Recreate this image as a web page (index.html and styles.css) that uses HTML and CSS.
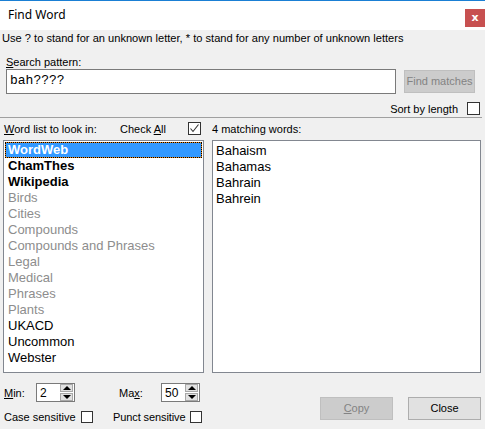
FILE: index.html
```html
<!DOCTYPE html>
<html>
<head>
<meta charset="utf-8">
<link rel="stylesheet" href="styles.css">
</head>
<body>
<div class="window">
  <div class="titlebar">
    <span class="title">Find Word</span>
    <div class="close">x</div>
  </div>
  <div class="content">
    <p class="hint">Use ? to stand for an unknown letter, * to stand for any number of unknown letters</p>
    <div class="search-label"><u>S</u>earch pattern:</div>
    <div class="search-row">
      <div class="input">bah????</div>
      <div class="btn btn-find disabled">Find matches</div>
    </div>
    <div class="sort-row">
      <span>Sort by length</span>
      <span class="cb"></span>
    </div>
    <div class="sep"></div>
    <div class="lists">
      <div class="col col-left">
        <div class="col-head">
          <span class="head-word"><u>W</u>ord list to look in:</span>
          <span class="head-check">Check <u>A</u>ll</span>
          <span class="cb checked"><svg width="11" height="11" viewBox="0 0 11 11"><polyline points="1.5,5.5 4,8.5 9.5,1.5" fill="none" stroke="#333" stroke-width="1.1"/></svg></span>
        </div>
        <div class="listbox left-box">
          <div class="item bold selected">WordWeb</div>
          <div class="item bold">ChamThes</div>
          <div class="item bold">Wikipedia</div>
          <div class="item dim">Birds</div>
          <div class="item dim">Cities</div>
          <div class="item dim">Compounds</div>
          <div class="item dim">Compounds and Phrases</div>
          <div class="item dim">Legal</div>
          <div class="item dim">Medical</div>
          <div class="item dim">Phrases</div>
          <div class="item dim">Plants</div>
          <div class="item">UKACD</div>
          <div class="item">Uncommon</div>
          <div class="item">Webster</div>
        </div>
      </div>
      <div class="col col-right">
        <div class="col-head">
          <span>4 matching words:</span>
        </div>
        <div class="listbox right-box">
          <div class="item">Bahaism</div>
          <div class="item">Bahamas</div>
          <div class="item">Bahrain</div>
          <div class="item">Bahrein</div>
        </div>
      </div>
    </div>
    <div class="bottom">
      <div class="opts">
        <div class="opt-row">
          <div class="cell cell-min">
            <span class="lbl lbl-min"><u>M</u>in:</span>
            <div class="spin"><span class="spin-val">2</span><div class="spin-btns"><span class="sb up"></span><span class="sb down"></span></div></div>
          </div>
          <div class="cell cell-max">
            <span class="lbl lbl-max">Ma<u>x</u>:</span>
            <div class="spin"><span class="spin-val">50</span><div class="spin-btns"><span class="sb up"></span><span class="sb down"></span></div></div>
          </div>
        </div>
        <div class="opt-row row2">
          <div class="cell cell-case">
            <span class="lbl lbl-case">Case sensitive</span>
            <span class="cb small"></span>
          </div>
          <div class="cell cell-punct">
            <span class="lbl lbl-punct">Punct sensitive</span>
            <span class="cb small"></span>
          </div>
        </div>
      </div>
      <div class="buttons">
        <div class="btn disabled"><u>C</u>opy</div>
        <div class="btn">Close</div>
      </div>
    </div>
  </div>
</div>
</body>
</html>
```

FILE: styles.css
```css
* { box-sizing: border-box; }
html, body {
  margin: 0;
  padding: 0;
  width: 485px;
  height: 429px;
  overflow: hidden;
  background: #f0f0f0;
}
body {
  font-family: "Liberation Sans", Arial, sans-serif;
  font-size: 11px;
  color: #000;
}
u { text-decoration: underline; text-underline-offset: 1px; }

.titlebar {
  height: 30px;
  border-top: 1px solid #1a7fd4;
  background: #fff;
  display: flex;
  align-items: flex-start;
}
.title {
  font-family: "Noto Sans", "Open Sans", sans-serif;
  font-size: 12px;
  margin-left: 8px;
  margin-top: 6px;
  line-height: 16px;
  color: #000;
}
.close {
  margin-left: auto;
  margin-top: 8px;
  width: 20px;
  height: 18px;
  background: #c75050;
  color: #fff;
  font-weight: bold;
  font-size: 11px;
  line-height: 17px;
  text-align: center;
  font-family: "DejaVu Sans", sans-serif;
}

.hint {
  margin: 2px 0 0 2px;
  line-height: 13px;
  height: 13px;
  font-size: 11.1px;
}
.search-label {
  margin: 11px 0 0 6px;
  line-height: 13px;
  height: 13px;
}
.search-row {
  display: flex;
  margin-top: 0;
  padding-left: 6px;
}
.input {
  width: 390px;
  height: 25px;
  background: #fff;
  border: 1px solid #7a7a7a;
  font-family: "Liberation Mono", "Courier New", monospace;
  font-size: 13px;
  line-height: 22px;
  padding-left: 3px;
}
.btn {
  width: 73px;
  height: 23px;
  border: 1px solid #adadad;
  background: #e1e1e1;
  text-align: center;
  line-height: 21px;
  font-size: 11px;
}
.btn.disabled {
  background: #cccccc;
  border-color: #bfbfbf;
  color: #838383;
}
.btn-find {
  width: 71px;
  margin-left: 8px;
  margin-top: 1px;
}

.sort-row {
  display: flex;
  align-items: center;
  justify-content: flex-end;
  gap: 9px;
  margin-top: 8px;
  padding-right: 5px;
  height: 13px;
}
.cb {
  display: inline-block;
  width: 13px;
  height: 13px;
  border: 1px solid #333;
  background: #fff;
  flex: none;
}
.cb.small { width: 12px; height: 12px; }
.cb svg { display: block; margin: 0; }

.sep {
  height: 1px;
  background: #a0a0a0;
  margin-top: 2px;
  width: 482px;
}

.lists {
  display: flex;
  margin-top: 4px;
  padding-left: 3px;
}
.col-head {
  display: flex;
  align-items: center;
  height: 13px;
  margin-bottom: 5px;
}
.col-left { width: 201px; }
.col-left .col-head { padding-left: 1px; }
.head-word { width: 116px; }
.head-check { width: 68px; }
.col-right { width: 269px; margin-left: 8px; }

.listbox {
  height: 233px;
  background: #fff;
  border: 1px solid #828790;
  font-size: 13px;
}
.left-box { padding: 1px 1px 0 1px; }
.right-box { padding: 2px 0 0 3px; }
.item {
  height: 16px;
  line-height: 16px;
  white-space: nowrap;
}
.left-box .item { padding-left: 3px; }
.bold { font-weight: bold; }
.dim { color: #8d8d8d; }
.selected {
  background: #3399ff;
  color: #fff;
  box-shadow: inset 0 0 0 1px #e98a1d;
  outline: 1px dotted #000;
  outline-offset: -1px;
}

.bottom {
  display: flex;
  padding: 0 4px 0 4px;
  margin-top: 10px;
}
.opt-row {
  display: flex;
  align-items: center;
  height: 19px;
}
.opt-row.row2 {
  height: 12px;
  margin-top: 9px;
}
.cell { display: flex; align-items: center; }
.cell-min { width: 115px; }
.lbl-min { width: 32px; }
.lbl-max { width: 42px; }
.cell-case { width: 109px; }
.lbl-case { width: 77px; }
.lbl-punct { width: 77px; letter-spacing: -0.1px; }

.spin {
  width: 39px;
  height: 19px;
  background: #fff;
  border: 1px solid #7a7a7a;
  display: flex;
  align-items: center;
  font-size: 12px;
  padding-left: 3px;
}
.spin-val { flex: 1; }
.spin-btns {
  display: flex;
  flex-direction: column;
  gap: 1px;
  margin-right: 1px;
}
.sb {
  width: 13px;
  height: 8px;
  background: #e1e1e1;
  border: 1px solid #a8a8a8;
  display: flex;
  align-items: center;
  justify-content: center;
}
.sb::after {
  content: "";
  width: 0;
  height: 0;
  border-left: 4px solid transparent;
  border-right: 4px solid transparent;
}
.sb.up::after { border-bottom: 4px solid #000; }
.sb.down::after { border-top: 4px solid #000; }

.buttons {
  margin-left: auto;
  align-self: flex-end;
  display: flex;
  gap: 15px;
  margin-bottom: 3px;
}
```
